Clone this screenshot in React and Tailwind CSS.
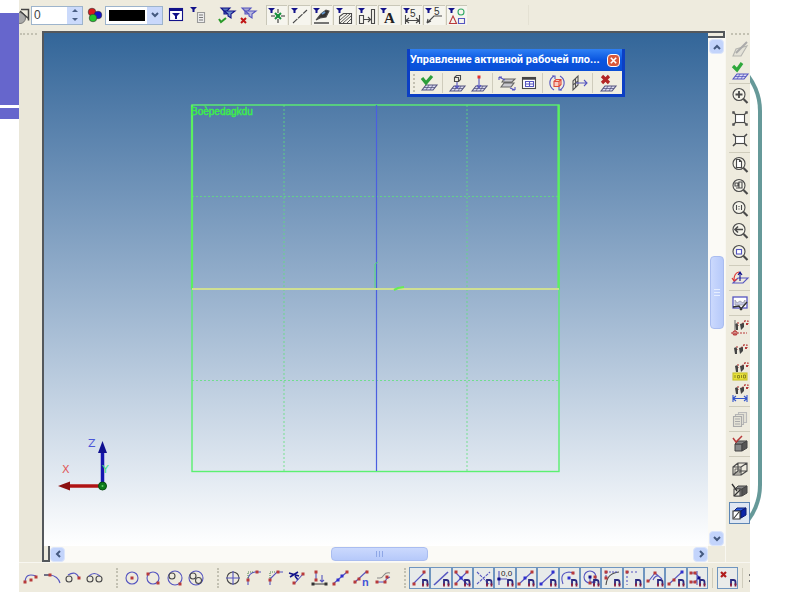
import { useState } from 'react';
import clsx from 'clsx';

const RED = '#b83a3a';
const BLUE = '#5555c0';
const NAVY = '#12128a';
const DARK = '#4a4a4a';

function Icon({ children }) {
  return (
    <svg viewBox="0 0 20 20" className="w-5 h-5 shrink-0 overflow-visible" fill="none" stroke={DARK} strokeWidth="1.1" aria-hidden="true">
      {children}
    </svg>
  );
}

// Small square handles, given as [x, y] centres
function Dots({ at, color = RED, size = 3 }) {
  return at.map(([x, y]) => (
    <rect key={`${x}-${y}`} x={x - size / 2} y={y - size / 2} width={size} height={size} fill={color} stroke="none" />
  ));
}

function Magnet() {
  return (
    <g>
      <path d="M13 17v-5h2.500q2 0 2 2v3" stroke="#2a2a80" strokeWidth="1.800" />
      <path d="M13 15.500v3M17.500 15.500v3" stroke="#8a1c3c" strokeWidth="1.800" />
    </g>
  );
}

function Funnel() {
  return <path d="M1 2h7L5.500 4.500v2.500h-2v-2.500z" fill={NAVY} stroke="none" />;
}

function Lens({ children }) {
  return (
    <g>
      <circle cx="9" cy="8.500" r="6" fill="#f4f3ea" />
      <path d="M13.500 13l4 4" strokeWidth="2.200" />
      {children}
    </g>
  );
}

function Plane({ y = 0, color = BLUE }) {
  return (
    <g transform={`translate(0 ${y})`} stroke={color}>
      <path d="M3 17l4-5h11l-4 5z" fill="#dcdcf2" />
      <path d="M5 14.500h11M10 12l-3 5M14 12l-3 5" strokeWidth="0.800" />
    </g>
  );
}

function Cube({ x = 0, y = 0, fill = '#888', side = '#555', stroke = '#444' }) {
  return (
    <g transform={`translate(${x} ${y})`} stroke={stroke} strokeWidth="1">
      <path d="M3 8h7v7H3z" fill={fill} />
      <path d="M3 8l3-3h9l-5 3z" fill={fill} />
      <path d="M10 8l5-3v7l-5 3z" fill={side} />
    </g>
  );
}

function Axes() {
  return (
    <g>
      <path d="M7 6v4M11 8l4-4M13 5h4v3" stroke={RED} strokeDasharray="2 1" />
      <path d="M4 8q3-2 3 1v5H5zM9 8l4-1v4l-3 3z" fill="#444" stroke="none" />
      <Dots at={[[16, 8]]} size={2} />
    </g>
  );
}

const filterTools = [
  { label: 'Filter window', icon: <><rect x="3.500" y="3.500" width="13" height="12" fill="#fff" stroke={NAVY} /><path d="M3 5h14" stroke={NAVY} strokeWidth="2" /><path d="M6 8h8l-3 3v3H9v-3z" fill={NAVY} stroke="none" /></> },
  { label: 'Filter list', icon: <><Funnel /><path d="M8.500 7.500h7v10h-7z" fill="#eee" stroke="#999" /><path d="M10 10h4M10 12.500h4M10 15h4" stroke="#777" /></> },
];

const applyTools = [
  { label: 'Apply filters', icon: <><path d="M4 3h9l-3 3v3H7V6z" fill="#5577bb" stroke={NAVY} /><path d="M7 6h11l-4 3v4l-3-2V9z" fill="#6f90cc" stroke={NAVY} /><path d="M2 14l2 3 5-4" stroke="#2a9b2a" strokeWidth="2" /></> },
  { label: 'Reset filters', icon: <><path d="M4 3h9l-3 3v3H7V6z" fill="#a9a9cf" stroke={BLUE} /><path d="M7 6h11l-4 3v4l-3-2V9z" fill="#bbbbdd" stroke={BLUE} /><path d="M3 13l5 5M8 13l-5 5" stroke="#c01616" strokeWidth="2" /></> },
];

const typeFilters = [
  { label: 'Points', icon: <><Funnel /><path d="M11 3v14M4 10h14" stroke="#333" strokeDasharray="4 1" /><path d="M8 7l6 6M14 7l-6 6" stroke="#14913c" strokeWidth="2" /></> },
  { label: 'Lines', icon: <><Funnel /><path d="M3 17L17 4" strokeDasharray="6 1" /></> },
  { label: 'Profiles', icon: <><Funnel /><path d="M4 14l5-6 5-4 3 1-3 6-6 1z" fill="#333" /><path d="M10 8l3-2" stroke="#69c" strokeWidth="2" /><path d="M2 17h15" strokeWidth="1.500" /></> },
  { label: 'Hatches', icon: <><Funnel /><path d="M4.500 17.500v-7l4-3h8v10z" /><path d="M5 14l7-6M5 17l10-9M8 17l8-7M12 17l4-4" strokeWidth="0.900" /></> },
  { label: 'Fragments', icon: <><Funnel /><path d="M2.500 9.500h4v8h-4zM14.500 3.500h3v14h-3zM7 13.500h6M11 11l2.500 2.500L11 16" /></> },
  { label: 'Texts', icon: <><Funnel /><text x="5" y="17" fontSize="15" fontWeight="bold" fill="#222" stroke="none" className="font-['Liberation_Serif',serif]">A</text></> },
  { label: 'Dimensions', icon: <><Funnel /><path d="M3.500 9v9M17.500 9v9M4 14.500h13M7 12l-3 2.500L7 17M14 12l3 2.500-3 2.500" /><text x="8" y="11" fontSize="10" fill="#333" stroke="none" className="font-['Liberation_Sans',sans-serif]">5</text></> },
  { label: 'Leaders', icon: <><Funnel /><path d="M3 17l7-7h8M3 17l1-4M3 17l4-2" /><text x="10" y="9" fontSize="10" fill="#333" stroke="none" className="font-['Liberation_Sans',sans-serif]">5</text></> },
  { label: 'Objects', icon: <><Funnel /><circle cx="14" cy="6" r="3" stroke="#33aa66" /><path d="M2.500 17.500L6 10l3.500 7.500z" stroke={RED} /><path d="M11.500 12.500h6v5h-6z" stroke={BLUE} /></> },
];

const planeGroups = [
  [{ label: 'Finish', icon: <><Plane color="#555580" /><path d="M3 5l4 5 6-7" stroke="#2c9e3c" strokeWidth="3.200" /></> }],
  [
    { label: 'Plane by face', icon: <><Plane y={1} color="#555580" /><path d="M7.500 4.500h4v4h-4zM7.500 4.500l2-2h4v4l-2 2" /><path d="M10 9v6M8 13l2 2 2-2" stroke={BLUE} /></> },
    { label: 'Plane by point', icon: <><Plane y={1} color="#555580" /><path d="M10 5v10M8 12l2 3 2-3" stroke={BLUE} /><Dots at={[[10, 4]]} color="#e03030" /></> },
  ],
  [
    { label: 'Move plane', icon: <><path d="M5 9l2-3h11l-3 3zM4 14l3-4h10l-3 4z" fill="#c9c9cf" stroke="#666" /><path d="M2 4l6 3M2 4v3M2 4h3M18 17l-5-2M18 17v-3M18 17h-3" stroke={BLUE} /></> },
    { label: 'Plane parameters', icon: <><rect x="3.500" y="4.500" width="13" height="11" fill="#fff" /><path d="M3 5.500h14" stroke="#444" strokeWidth="2.500" /><path d="M6.500 8.500h8v5h-8zM10.500 8v6M6 11h8" stroke={BLUE} /></> },
  ],
  [
    { label: 'Rotate plane', icon: <><path d="M7 3a8 8 0 0 0 0 14M13 3a8 8 0 0 1 0 14" stroke={BLUE} /><path d="M5 3h3v3M15 17h-3v-3" stroke={BLUE} /><path d="M7 8.500h5v5H7zM7 8.500l2-2h5v5l-2 2M12 8.500l2-2" stroke="#e04a3a" fill="#f8ccc4" /></> },
    { label: 'Plane normal', icon: <><path d="M4 8l5-5v9l-5 5zM4 12l5-4M6.500 6v9" stroke="#555" /><path d="M7 10h11M15 7l3 3-3 3" stroke={BLUE} /></> },
  ],
  [{ label: 'Cancel', icon: <><Plane y={1} color="#555580" /><path d="M4 3l7 7M11 3l-7 7" stroke="#b32626" strokeWidth="3.200" /></> }],
];

const viewGroups = [
  [
    { label: 'Edit', icon: <><path d="M3 17l3-7 11-3-6 10z" stroke="#b5b5b0" fill="#e4e2d8" /><path d="M6 14L17 3" stroke="#aaa" strokeWidth="2" /></> },
    { label: 'Accept', icon: <><Plane y={1} /><path d="M3 5l4 4 5-7" stroke="#2fa83c" strokeWidth="3.200" /></> },
  ],
  [
    { label: 'Zoom in', icon: <Lens><path d="M9 5v7M5.500 8.500h7" strokeWidth="1.800" /></Lens> },
    { label: 'Shrink', icon: <><rect x="5.500" y="6.500" width="9" height="8" fill="#fff" /><path d="M3 4l3 3M17 4l-3 3M3 17l3-3M17 17l-3-3" /><Dots at={[[3.500, 4.500], [16.500, 4.500], [3.500, 16.500], [16.500, 16.500]]} color="#555" size={2.500} /></> },
    { label: 'Enlarge', icon: <><rect x="5.500" y="6.500" width="9" height="7" fill="#fff" /><path d="M3 4l3 3M17 4l-3 3M3 16l3-3M17 16l-3-3" strokeWidth="1.600" /></> },
  ],
  [
    { label: 'Zoom to page', icon: <Lens><path d="M6.500 4.500h3l2 2v6h-5z" fill="#fff" /><path d="M9.500 4.500v2h2" /></Lens> },
    { label: 'Zoom to objects', icon: <Lens><path d="M5 6h3v3H5zM9 5h3v6H9zM6 11h4" /></Lens> },
    { label: 'Actual size', icon: <Lens><path d="M6.500 6v5M11.500 6v5M9 7v1M9 9.500v1" /></Lens> },
    { label: 'Previous view', icon: <Lens><path d="M5 8.500h8M8 5.500l-3 3 3 3" strokeWidth="1.600" /></Lens> },
    { label: 'Zoom window', icon: <Lens><rect x="6.500" y="6.500" width="5" height="4.500" fill="#fff" stroke={BLUE} /></Lens> },
  ],
  [{ label: 'Work plane', icon: <><path d="M3 15l5-5h10l-5 5z" stroke={BLUE} /><path d="M10 13V4M8 7l2-3 2 3" stroke={NAVY} /><path d="M9 4q-5 1-5 8M2 10l2 3 3-2" stroke="#d33" /></> }],
  [{ label: 'Redraw', icon: <><rect x="3" y="4" width="14" height="11" stroke={BLUE} fill="#fff" strokeWidth="1.300" /><path d="M5 7l2 3 3-2 3 2 2-3v5H5z" fill="#c8cbe6" stroke="#99a" strokeWidth="0.800" /><path d="M10 17l7-8M3 14l6-1 3 4" stroke="#333" strokeWidth="1.300" /></> }],
  [
    { label: 'Snap points', icon: <><g transform="translate(1 -2)"><Axes /></g><path d="M5 2v10" stroke="#777" /><circle cx="5" cy="15" r="2" stroke={RED} /><path d="M1 15h16M5 12v6" stroke={RED} strokeDasharray="2 1" /></> },
    { label: 'Snap axes', icon: <Axes /> },
    { label: 'Value tags', icon: <><g transform="translate(1 -4)"><Axes /></g><rect x="3" y="11" width="14" height="7" fill="#e8e23a" stroke="#c8c12a" /><path d="M5 13v3M7.500 13.500h2v2.500h-2zM11.500 13v3M13.500 13h2v3h-2z" strokeWidth="0.800" stroke="#77731a" /></> },
    { label: 'Value dimensions', icon: <><g transform="translate(1 -4)"><Axes /></g><path d="M3 11v7M17 11v7M3 14.500h14M6 12l-3 2.500L6 17M14 12l3 2.500-3 2.500" stroke="#3355cc" /></> },
  ],
  [{ label: 'Pages', icon: <><path d="M8.500 3.500h8v10h-8z" fill="#e4e2d6" stroke="#bbb" /><path d="M5.500 5.500h8v10h-8z" fill="#e4e2d6" stroke="#b5b5b5" /><path d="M3.500 7.500h8v10h-8zM5 10h5M5 12.500h5M5 15h5" fill="#e4e2d6" stroke="#aaa" /></> }],
  [{ label: 'Check model', icon: <><Cube x={2} y={2} /><path d="M3 4l3 4 6-6" stroke={RED} strokeWidth="1.500" /></> }],
  [
    { label: 'Wireframe', icon: <><path d="M3 8h8v8H3zM8 4h9v8H8zM3 8l5-4M11 8l6-4M11 16l6-4M3 16l5-4" /><path d="M5 10h5v4H5z" strokeWidth="0.800" /></> },
    { label: 'Hidden lines', icon: <><Cube x={2} /><path d="M4 8h6v7H4z" fill="#e5e3d8" /><path d="M2 3l5 7M4 15l6-6" stroke="#333" strokeWidth="1.300" /></> },
    { label: 'Shaded', active: true, icon: <><Cube x={1} fill="#2b5be0" side="#0c24a8" stroke="#0b1a70" /><path d="M3 8h7v8H3zM4 15l5-6" fill="#fff" stroke="#333" /></> },
  ],
];

const arcTools = [
  { label: 'Arc by centre', icon: <><path d="M4 15q0-11 11-7" stroke={BLUE} /><Dots at={[[4, 14], [15, 9], [10, 12]]} /></> },
  { label: 'Tangent arc', icon: <><path d="M2 7h6q8 1 10 8" stroke={BLUE} /><path d="M2 7h6" /><Dots at={[[8, 7]]} /></> },
  { label: 'Arc tangent to circle', icon: <><circle cx="5" cy="11" r="3" /><path d="M4 7q8-5 11 3" stroke={BLUE} /><Dots at={[[15, 10]]} /></> },
  { label: 'Arc tangent to two circles', icon: <><circle cx="5" cy="11" r="3" /><circle cx="14" cy="11" r="3" /><path d="M4 8q5-5 11 0" stroke={BLUE} /></> },
];

const circleTools = [
  { label: 'Circle by centre', icon: <><circle cx="10" cy="10" r="6" stroke={BLUE} /><Dots at={[[10, 10]]} /></> },
  { label: 'Circle by two points', icon: <><circle cx="10" cy="10" r="6" stroke={BLUE} /><Dots at={[[5, 6], [15, 15]]} /></> },
  { label: 'Circle tangent to circle', icon: <><circle cx="10" cy="10" r="7" stroke={BLUE} /><circle cx="7" cy="8" r="3" /><Dots at={[[15, 16]]} /></> },
  { label: 'Circle tangent to two circles', icon: <><circle cx="10" cy="10" r="7" stroke={BLUE} /><circle cx="7" cy="8" r="3" /><circle cx="12.500" cy="12.500" r="3" /></> },
];

const editTools = [
  { label: 'Centre mark', icon: <><circle cx="10" cy="10" r="6" /><path d="M10 3v14M3 10h14" stroke={BLUE} /></> },
  { label: 'Fillet', icon: <><path d="M4 17v-6q1-6 7-7h6" stroke={BLUE} /><path d="M4 10V4h6" stroke="#585" strokeDasharray="1 1" /><Dots at={[[4, 12], [13, 4]]} /></> },
  { label: 'Chamfer', icon: <><path d="M4 17v-6l7-7h6" stroke={BLUE} /><path d="M4 10V4h6" stroke="#585" strokeDasharray="1 1" /><Dots at={[[4, 12], [12, 4]]} /></> },
  { label: 'Trim', icon: <><path d="M2 5l10 3M3 9l8-5M8 8l3 4" stroke={NAVY} strokeWidth="1.500" /><path d="M7 16l9-10" stroke={BLUE} /><Dots at={[[7, 15], [16, 6]]} /></> },
  { label: 'Project point', icon: <><path d="M3 16h14" /><path d="M7 5v7M13 7v7M11 12l2 2 2-2" stroke={BLUE} /><Dots at={[[7, 4], [7, 12]]} /><Dots at={[[4, 16], [17, 16]]} color="#333" /></> },
  { label: 'Segment', icon: <><path d="M3 16L17 4" stroke={BLUE} /><Dots at={[[4, 16], [17, 4]]} /><Dots at={[[8, 12], [12, 8]]} color="#3030d0" /></> },
  { label: 'Divide in n', icon: <><path d="M2 15L15 3" stroke={BLUE} /><Dots at={[[3, 14], [7, 11], [15, 4]]} /><text x="10" y="18" fontSize="11" fontWeight="bold" fill="#4455d8" stroke="none" className="font-['Liberation_Sans',sans-serif]">n</text></> },
  { label: 'Offset', icon: <><path d="M4 10h3q2 0 4-3t6-2" stroke="#888" /><path d="M3 14h9q1-4 5-5" stroke={BLUE} /><Dots at={[[4, 14], [12, 14], [14, 9]]} /></> },
];

const snapTools = [
  { label: 'End point', icon: <><path d="M3 16L15 4" stroke={BLUE} /><Dots at={[[4, 16], [14, 4]]} /></> },
  { label: 'On line', icon: <path d="M3 17L17 4" stroke={BLUE} strokeWidth="1.600" /> },
  { label: 'Intersection', icon: <><path d="M3 4l13 13M3 16L15 4" stroke={BLUE} /><Dots at={[[4, 4], [15, 4], [4, 16]]} /><Dots at={[[9, 10]]} color="#3030d0" /></> },
  { label: 'Virtual intersection', icon: <><path d="M3 4l12 12M3 16L16 4" stroke={BLUE} strokeDasharray="3 1" /></> },
  { label: 'Coordinates', icon: <><path d="M4 3v14M2 11h10" stroke={BLUE} /><Dots at={[[4, 11]]} color={NAVY} /><text x="6" y="8" fontSize="8" fill="#222" stroke="none" className="font-['Liberation_Sans',sans-serif]">0,0</text></> },
  { label: 'Middle', icon: <><path d="M3 16L16 4" stroke={BLUE} /><Dots at={[[3, 16], [16, 4]]} /><Dots at={[[9, 10]]} color="#3030d0" /></> },
  { label: 'Nearest', icon: <><path d="M3 16L16 4" stroke={BLUE} /><Dots at={[[3, 16], [15, 4]]} color="#3030d0" /></> },
  { label: 'Arc centre', icon: <><path d="M4 16Q0 5 10 4q3 0 5 2" stroke={BLUE} /><Dots at={[[14, 5]]} /><Dots at={[[10, 10]]} color="#3030d0" /></> },
  { label: 'Circle centre', icon: <><circle cx="9" cy="9" r="6" stroke={BLUE} /><path d="M9 9v5h6" stroke={BLUE} /><Dots at={[[9, 9]]} color={NAVY} /><Dots at={[[9, 15], [14, 9]]} /></> },
  { label: 'Tangent', icon: <><path d="M4 17Q5 5 17 4" /><path d="M4 4h11M4 4v6" stroke={BLUE} strokeDasharray="2 1" /><Dots at={[[4, 4], [4, 10]]} /></> },
  { label: 'Ortho', icon: <><path d="M4 4h12M4 4v13" stroke={BLUE} strokeDasharray="2 2" /><Dots at={[[4, 4]]} /></> },
  { label: 'Angle', icon: <><path d="M3 14l7-9 7 6M8 12q2-5 6-4" stroke={BLUE} /><Dots at={[[3, 13], [10, 5]]} /></> },
  { label: 'Along line', icon: <><path d="M3 16L16 4" stroke={BLUE} /><Dots at={[[3, 16], [8, 12]]} /><Dots at={[[16, 4]]} color="#3030d0" /></> },
  { label: 'Symmetry', icon: <><path d="M10 3v14M3 5h5l4 4M3 14h5l4-5" stroke={BLUE} /><Dots at={[[4, 5], [4, 14], [8, 5], [8, 14]]} /><Dots at={[[12, 10]]} color={NAVY} /></> },
];

function ToolButton({ tool, className }) {
  return (
    <button type="button" aria-label={tool.label} className={clsx('flex items-center justify-center', className)}>
      <Icon>{tool.icon}</Icon>
    </button>
  );
}

function Grip({ className }) {
  return <span className={clsx('border-dotted border-[#c3c1b2]', className)} />;
}

function ScrollButton({ label, d }) {
  return (
    <button type="button" aria-label={label} className="flex items-center justify-center w-[15px] h-[15px] shrink-0 rounded-sm border border-[#dbe5fb] bg-[#c3d4fb]">
      <svg viewBox="0 0 10 10" className="w-[10px] h-[10px]" fill="none" stroke="#44597f" strokeWidth="2" aria-hidden="true">
        <path d={d} />
      </svg>
    </button>
  );
}

function TopToolbar() {
  const [width, setWidth] = useState('0');

  return (
    <div className="flex items-center h-[30px] shrink-0 overflow-hidden bg-[#eeebde]">
      <svg viewBox="0 0 12 20" className="w-3 h-5 shrink-0" fill="none" stroke="#444" aria-hidden="true">
        <circle cx="1" cy="13" r="5.500" fill="#aaa" stroke="#777" />
        <path d="M2 4.500h7.500v11M1 6l9 8" strokeWidth="1.500" />
      </svg>
      <div className="flex w-[52px] h-[19px] shrink-0 border border-[#9db4cc] bg-white">
        <input
          type="text"
          aria-label="Line width"
          value={width}
          onChange={(e) => setWidth(e.target.value)}
          className="w-[35px] px-[2px] font-['Liberation_Sans',sans-serif] text-xs leading-4 text-[#444] outline-none"
        />
        <div className="flex flex-col flex-1">
          {[['Increase', 'M2 4l3-3 3 3z'], ['Decrease', 'M2 1l3 3 3-3z']].map(([label, d]) => (
            <button key={label} type="button" aria-label={label} className="flex items-center justify-center flex-1 bg-[#cbdafb]">
              <svg viewBox="0 0 10 5" className="w-[10px] h-[5px]" fill="#4b5f85" aria-hidden="true"><path d={d} /></svg>
            </button>
          ))}
        </div>
      </div>
      <button type="button" aria-label="Colour" className="flex items-center justify-center w-[21px] ml-px shrink-0">
        <svg viewBox="0 0 16 16" className="w-4 h-4" stroke="#333" strokeWidth="0.600" aria-hidden="true">
          <circle cx="5" cy="5" r="3.800" fill="#d81c1c" />
          <circle cx="11" cy="8" r="3.800" fill="#1414c8" />
          <circle cx="6" cy="11" r="3.800" fill="#22c82e" />
        </svg>
      </button>
      <div className="relative w-[58px] h-[19px] shrink-0 border border-[#9db4cc] bg-white p-[3px]">
        <select aria-label="Line colour" className="block w-[36px] h-[11px] appearance-none bg-black outline-none">
          <option value="#000000" aria-label="Black" />
        </select>
        <span className="absolute right-0 top-0 flex items-center justify-center w-[15px] h-[17px] bg-[#c9d8fb] pointer-events-none">
          <svg viewBox="0 0 10 10" className="w-[10px] h-[10px]" fill="none" stroke="#44597f" strokeWidth="2" aria-hidden="true"><path d="M2 3l3 3 3-3" /></svg>
        </span>
      </div>
      <div className="flex ml-px shrink-0">
        {filterTools.map((tool) => <ToolButton key={tool.label} tool={tool} className="w-[23px]" />)}
      </div>
      <div className="flex ml-[6px] shrink-0">
        {applyTools.map((tool) => <ToolButton key={tool.label} tool={tool} className="w-[21px]" />)}
      </div>
      <div className="flex w-[201px] ml-[8px] gap-px shrink-0">
        {typeFilters.map((tool) => (
          <ToolButton key={tool.label} tool={tool} className="flex-1 min-w-0 h-5 border-t border-l border-[#c9c7b8] bg-[#f6f5ee]" />
        ))}
      </div>
      <span className="w-[60px] h-5 ml-[2px] border-r border-[#e4e1d3]" />
    </div>
  );
}

function WorkPlaneWindow() {
  return (
    <section className="absolute top-4 right-[83px] w-[218px] border-[3px] border-t-0 border-[#0c3fc4] bg-[#0c3fc4]">
      <header className="flex items-center justify-between h-[22px] bg-gradient-to-b from-[#2f80f4] via-[#0a55e0] to-[#0a4fd6]">
        <h2 className="font-['Roboto',sans-serif] text-[11px] leading-4 font-bold text-white whitespace-nowrap">Управление активной рабочей пло...</h2>
        <button type="button" aria-label="Close" className="flex items-center justify-center w-[13px] h-[13px] mr-[2px] shrink-0 rounded-sm border border-white bg-[#d9583a]">
          <svg viewBox="0 0 10 10" className="w-[9px] h-[9px]" stroke="#fff" strokeWidth="1.800" aria-hidden="true"><path d="M2 2l6 6M8 2l-6 6" /></svg>
        </button>
      </header>
      <div className="flex items-center h-[23px] bg-[#f0eee1]">
        <Grip className="h-[18px] ml-[3px] border-l-2" />
        {planeGroups.map((group, i) => (
          <div
            key={group[0].label}
            className={clsx('flex justify-center', i > 0 && 'border-l border-[#cfccbc]', i === 0 ? 'w-[27px]' : group.length > 1 ? 'w-[50px]' : 'flex-1')}
          >
            {group.map((tool) => <ToolButton key={tool.label} tool={tool} className="w-[22px]" />)}
          </div>
        ))}
      </div>
    </section>
  );
}

function Scene() {
  return (
    <svg viewBox="44 33 664 513" className="absolute inset-0 w-full h-full" fill="none" role="img" aria-label="Work plane">
      <g stroke="#5fe07c" strokeDasharray="2 2" opacity="0.800">
        <path d="M284 105v366M467 105v366M192 196.500h367M192 380.500h367" />
      </g>
      <rect x="192" y="105" width="367" height="366.500" stroke="#5bf070" strokeWidth="1.400" />
      <path d="M192 289V105M558.500 105v184" stroke="#5bf060" strokeWidth="2.200" />
      <path d="M376.500 105v366" stroke="#4b5fe0" strokeWidth="1.200" />
      <path d="M192 289h367" stroke="#cfdf92" strokeWidth="1.800" />
      <path d="M375 288v-24l3-2" stroke="#55dd77" />
      <path d="M394 290l4-2 6-1" stroke="#66ee55" strokeWidth="2" />
      <text x="191" y="115" fontSize="10" fill="#3cf048" stroke="#3cf048" strokeWidth="0.400" className="font-['Liberation_Sans',sans-serif]">Boѐpedagkdu</text>

      <path d="M102.500 486V450" stroke="#1515b0" strokeWidth="3.500" />
      <path d="M102.500 441l4.500 12h-9z" fill="#101090" />
      <path d="M102 486H68" stroke="#b01414" strokeWidth="3.500" />
      <path d="M58 486l12-4.500v9z" fill="#8c1010" />
      <circle cx="102.500" cy="486" r="4" fill="#0c7a1c" stroke="#084d10" />
      <circle cx="102.500" cy="486" r="1" fill="#6c6" />
      <g fontSize="11" className="font-['DejaVu_Sans',sans-serif]">
        <text x="88" y="447" fill="#4a55d8">Z</text>
        <text x="62" y="473" fill="#e05858">X</text>
        <text x="102" y="473" fill="#4ce07c">Y</text>
      </g>
    </svg>
  );
}

function Viewport() {
  return (
    <main className="flex flex-col flex-1 min-w-0 mt-px border-t-2 border-l-2 border-[#54585c]">
      <div className="flex flex-1 min-h-0">
        <div className="relative flex-1 min-w-0 bg-gradient-to-b from-[#336699] to-white">
          <Scene />
          <WorkPlaneWindow />
        </div>
        <div className="flex flex-col items-center justify-between w-[17px] shrink-0 bg-[#fbfaf6]">
          <div className="w-full">
            <div className="h-[5px] border-b-2 border-r-2 border-[#54585c] bg-[#eeebde]" />
            <div className="flex justify-center pt-px"><ScrollButton label="Scroll up" d="M2 7l3-3 3 3" /></div>
          </div>
          <div className="flex items-center justify-center w-[14px] h-[73px] rounded-sm border border-[#aabdf0] bg-gradient-to-r from-[#cbd9fd] to-[#b6c9fa]">
            <span className="flex items-center w-[6px] h-[7px] border-y border-[#e6eeff]"><span className="w-[6px] h-px bg-[#e6eeff]" /></span>
          </div>
          <ScrollButton label="Scroll down" d="M2 3l3 3 3-3" />
        </div>
      </div>
      <div className="flex h-[16px] shrink-0 bg-[#eeebde]">
        <div className="w-[6px] shrink-0 border-r-2 border-b-2 border-[#54585c]" />
        <div className="flex items-center justify-between flex-1 bg-[#fbfaf6]">
          <ScrollButton label="Scroll left" d="M7 2L4 5l3 3" />
          <div className="flex items-center justify-center w-[97px] h-[14px] rounded-sm border border-[#aabdf0] bg-gradient-to-b from-[#cbd9fd] to-[#b6c9fa]">
            <span className="flex items-center justify-center w-[7px] h-[6px] border-x border-[#8ea7e6]"><span className="w-px h-[6px] bg-[#8ea7e6]" /></span>
          </div>
          <ScrollButton label="Scroll right" d="M4 2l3 3-3 3" />
        </div>
        <div className="w-[17px] shrink-0" />
      </div>
    </main>
  );
}

function ViewToolbar() {
  return (
    <aside className="flex flex-col w-[25px] shrink-0 pl-[3px] border-l border-[#f8f7f1]">
      <Grip className="w-[18px] h-1 mt-[3px] mb-px ml-[2px] border-t-2" />
      {viewGroups.map((group, i) => (
        <div key={group[0].label} className="flex flex-col">
          {i > 0 && <span className="h-px my-px bg-[#cfccbc]" />}
          {group.map((tool) => (
            <ToolButton key={tool.label} tool={tool} className={clsx('h-[22px]', tool.active && 'border border-[#5c85b5] bg-[#dfe7f2]')} />
          ))}
        </div>
      ))}
    </aside>
  );
}

function DrawToolbar() {
  return (
    <div className="flex items-center h-[30px] shrink-0 overflow-hidden border-t border-[#f8f7f1] bg-[#eeebde]">
      <div className="flex w-[86px] ml-px shrink-0">
        {arcTools.map((tool) => <ToolButton key={tool.label} tool={tool} className="flex-1 min-w-0" />)}
      </div>
      <Grip className="h-5 ml-[10px] mr-[3px] border-l-2" />
      <div className="flex w-[86px] shrink-0">
        {circleTools.map((tool) => <ToolButton key={tool.label} tool={tool} className="flex-1 min-w-0" />)}
      </div>
      <Grip className="h-5 ml-[10px] mr-[3px] border-l-2" />
      <div className="flex w-[172px] shrink-0">
        {editTools.map((tool) => <ToolButton key={tool.label} tool={tool} className="flex-1 min-w-0" />)}
      </div>
      <Grip className="h-5 ml-[10px] mr-[3px] border-l-2" />
      <div className="flex w-[299px] shrink-0">
        {snapTools.map((tool) => (
          <ToolButton key={tool.label} tool={{ ...tool, icon: <>{tool.icon}<Magnet /></> }} className="flex-1 min-w-0 h-[22px] border border-[#6f95bf] bg-[#e8ebea]" />
        ))}
      </div>
      <span className="w-px h-5 mx-[4px] bg-[#cfccbc]" />
      <ToolButton
        tool={{ label: 'Snap off', icon: <><path d="M3 4l5 5M8 4L3 9" stroke="#b01c1c" strokeWidth="2.200" /><Magnet /></> }}
        className="w-[21px] h-[22px] shrink-0 border border-[#6f95bf] bg-[#e9ebea]"
      />
      <span className="w-px h-5 mx-[4px] bg-[#cfccbc]" />
      <span className="w-px h-2 ml-auto border-y-2 border-[#777]" />
    </div>
  );
}

export default function App() {
  return (
    <div className="flex w-full h-screen overflow-hidden bg-white">
      <div className="flex flex-col w-[19px] shrink-0 pt-[13px] gap-[3px]">
        <div className="h-[92px] bg-[#6666cc]" />
        <div className="h-[11px] bg-[#6666cc]" />
      </div>

      <div className="flex flex-col flex-1 min-w-0 mb-2 bg-[#eeebde]">
        <TopToolbar />
        <div className="flex flex-1 min-h-0">
          <div className="w-[23px] shrink-0 bg-[#eae7d9]">
            <Grip className="block w-[17px] mt-[3px] ml-px border-t-2" />
          </div>
          <Viewport />
          <ViewToolbar />
        </div>
        <DrawToolbar />
      </div>

      <div className="flex w-[50px] shrink-0 overflow-hidden">
        <div className="w-[76px] -ml-16 mt-[51px] mb-[55px] shrink-0 rounded-r-[60px] border-4 border-l-0 border-[#669999]" />
      </div>
    </div>
  );
}
